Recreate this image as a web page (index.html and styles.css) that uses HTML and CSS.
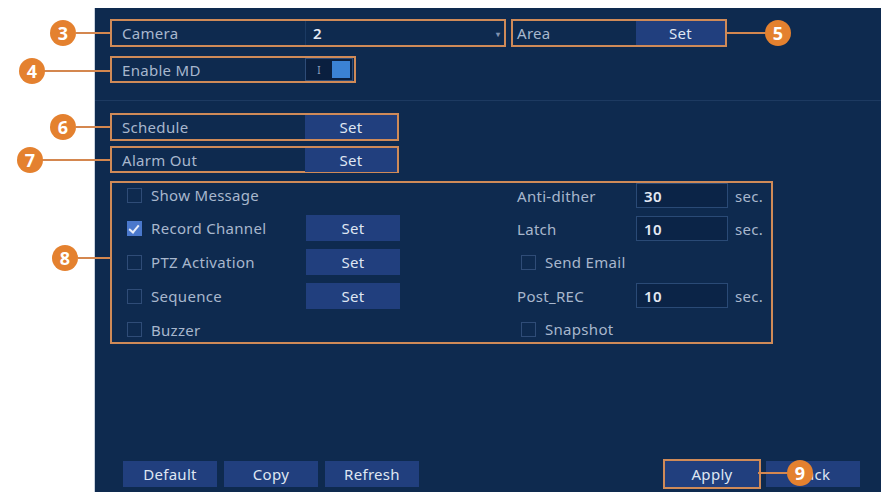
FILE: index.html
```html
<!DOCTYPE html>
<html lang="en">
  <head>
    <title>Motion Detection</title>
    <link rel="stylesheet" href="styles.css">
  </head>
  <body>
    <div class="page">
      <div class="gutter"></div>

      <div class="panel">
        <div class="row">
          <div class="field hl camera">
            <span class="label">Camera</span>
            <span class="select">2<span class="caret">&#9662;</span></span>
          </div>
          <div class="field hl area">
            <span class="label">Area</span>
            <button class="btn">Set</button>
          </div>
        </div>

        <div class="field hl enable">
          <span class="label">Enable MD</span>
          <span class="toggle"><span class="bar">I</span><span class="knob"></span></span>
        </div>

        <div class="divider"></div>

        <div class="field hl short">
          <span class="label">Schedule</span>
          <button class="btn">Set</button>
        </div>
        <div class="field hl short alarm">
          <span class="label">Alarm Out</span>
          <button class="btn">Set</button>
        </div>

        <div class="group hl">
          <div class="col">
            <div class="item"><span class="check"></span><span class="name">Show Message</span></div>
            <div class="item"><span class="check on"></span><span class="name">Record Channel</span><button class="btn">Set</button></div>
            <div class="item"><span class="check"></span><span class="name">PTZ Activation</span><button class="btn">Set</button></div>
            <div class="item"><span class="check"></span><span class="name">Sequence</span><button class="btn">Set</button></div>
            <div class="item"><span class="check"></span><span class="name">Buzzer</span></div>
          </div>
          <div class="col right">
            <div class="item"><span class="key">Anti-dither</span><span class="input">30</span><span class="unit">sec.</span></div>
            <div class="item"><span class="key">Latch</span><span class="input">10</span><span class="unit">sec.</span></div>
            <div class="item indent"><span class="check"></span><span class="name">Send Email</span></div>
            <div class="item"><span class="key">Post_REC</span><span class="input">10</span><span class="unit">sec.</span></div>
            <div class="item indent"><span class="check"></span><span class="name">Snapshot</span></div>
          </div>
        </div>

        <div class="footer">
          <div class="btns">
            <button class="btn">Default</button>
            <button class="btn">Copy</button>
            <button class="btn">Refresh</button>
          </div>
          <div class="btns">
            <button class="btn apply">Apply</button>
            <button class="btn">Back</button>
          </div>
        </div>
      </div>

      <!-- callouts -->
      <div class="line" style="left:76px;top:32px;width:34px"></div>
      <div class="line" style="left:44px;top:70px;width:66px"></div>
      <div class="line" style="left:727px;top:32px;width:40px"></div>
      <div class="line" style="left:76px;top:126px;width:34px"></div>
      <div class="line" style="left:42px;top:159px;width:68px"></div>
      <div class="line" style="left:78px;top:257px;width:32px"></div>
      <div class="line" style="left:758px;top:472px;width:30px"></div>

      <div class="badge" style="left:50px;top:20px">3</div>
      <div class="badge" style="left:19px;top:58px">4</div>
      <div class="badge" style="left:765px;top:20px">5</div>
      <div class="badge" style="left:50px;top:114px">6</div>
      <div class="badge" style="left:17px;top:147px">7</div>
      <div class="badge" style="left:52px;top:245px">8</div>
      <div class="badge" style="left:787px;top:460px">9</div>
    </div>
  </body>
</html>
```

FILE: styles.css
```css
body {
  margin: 0;
  background: #fff;
  font-family: "Noto Sans", "Open Sans", sans-serif;
  font-size: 15px;
  letter-spacing: 0.3px;
}
.page {
  position: relative;
  display: flex;
  width: 881px;
  height: 492px;
  padding-top: 8px;
  box-sizing: border-box;
  overflow: hidden;
}
.gutter {
  width: 94px;
  flex-shrink: 0;
}
.panel {
  flex-grow: 1;
  background: #0e2a4f;
  border-left: 1px solid #c9d2de;
  display: flex;
  flex-direction: column;
  padding: 11px 21px 5px 15px;
  color: #a8b7cd;
}
.row {
  display: flex;
  gap: 5px;
}
.hl {
  border: 2px solid #cf8a58;
  box-sizing: border-box;
}
.field {
  display: flex;
  align-items: center;
  height: 28px;
}
.label {
  width: 193px;
  padding-left: 10px;
  flex-shrink: 0;
  box-sizing: border-box;
}
.camera {
  width: 396px;
}
.select {
  flex-grow: 1;
  height: 100%;
  display: flex;
  align-items: center;
  justify-content: space-between;
  padding: 0 4px 0 7px;
  border-left: 1px solid #1b3a63;
  color: #e3e9f3;
  font-weight: 600;
}
.caret {
  font-size: 8px;
  color: #7f93b0;
}
.area {
  width: 216px;
}
.area .label {
  width: 123px;
  padding-left: 4px;
}
.btn {
  font-family: inherit;
  font-size: 15px;
  letter-spacing: 0.3px;
  color: #dfe6f2;
  background: #213f7e;
  border: none;
  height: 24px;
  width: 90px;
  padding: 0;
}
.area .btn {
  height: 100%;
}
.enable {
  width: 246px;
  height: 27px;
  margin-top: 9px;
}
.toggle {
  display: flex;
  align-items: center;
  height: 23px;
  width: 48px;
  border: 1px solid #2e4c78;
  background: #0a1f3f;
  box-sizing: border-box;
}
.bar {
  width: 26px;
  text-align: center;
  font-size: 10px;
  color: #8ea2bf;
}
.knob {
  width: 18px;
  height: 17px;
  background: #3b82d4;
}
.divider {
  height: 1px;
  background: #1d3a61;
  margin: 17px -21px 12px -15px;
}
.short {
  width: 289px;
}
.short .btn {
  height: 24px;
  width: 92px;
}
.alarm {
  margin-top: 5px;
  height: 27px;
}
.group {
  margin-top: 8px;
  width: 663px;
  height: 163px;
  display: flex;
  padding: 0 0 0 15px;
}
.col {
  width: 390px;
  display: flex;
  flex-direction: column;
  gap: 8px;
}
.item {
  display: flex;
  align-items: center;
  height: 26px;
}
.item:first-child {
  height: 25px;
}
.check {
  width: 13px;
  height: 13px;
  border: 1px solid #2f4c77;
  margin-right: 9px;
  flex-shrink: 0;
  position: relative;
}
.check.on {
  background: #4a78cc;
  border-color: #4a78cc;
}
.check.on::after {
  content: "";
  position: absolute;
  left: 3px;
  top: 1px;
  width: 4px;
  height: 8px;
  border: solid #e8eefa;
  border-width: 0 2px 2px 0;
  transform: rotate(40deg);
}
.name {
  width: 155px;
}
.col .btn {
  width: 94px;
  height: 26px;
}
.right {
  width: auto;
}
.key {
  width: 119px;
}
.input {
  width: 92px;
  height: 25px;
  box-sizing: border-box;
  border: 1px solid #2a4a76;
  background: #0b2447;
  color: #e3e9f3;
  font-weight: 600;
  padding-left: 7px;
  display: flex;
  align-items: center;
}
.unit {
  margin-left: 7px;
}
.indent {
  padding-left: 4px;
}
.footer {
  margin-top: auto;
  display: flex;
  justify-content: space-between;
  padding-left: 13px;
}
.btns {
  display: flex;
  gap: 7px;
}
.footer .btn {
  width: 94px;
  height: 26px;
}
.apply {
  outline: 2px solid #cf8a58;
  outline-offset: 0;
}
.line {
  position: absolute;
  height: 2px;
  background: #d4874f;
}
.badge {
  position: absolute;
  width: 26px;
  height: 26px;
  border-radius: 50%;
  background: #e4812f;
  color: #fff;
  font-weight: 700;
  font-size: 18px;
  line-height: 26px;
  text-align: center;
  letter-spacing: 0;
}
```
